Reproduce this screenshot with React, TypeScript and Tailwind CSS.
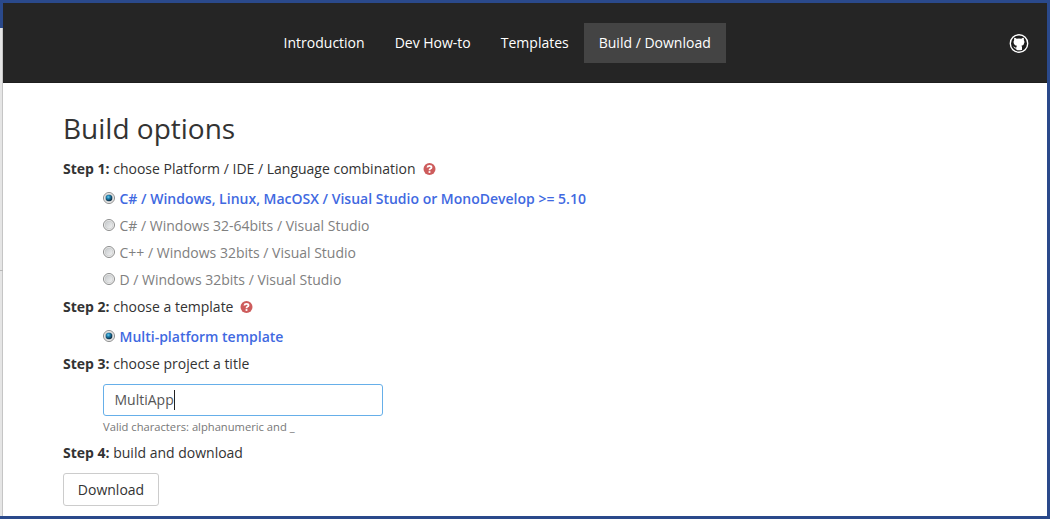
import { useState } from "react";

const navItems = ["Introduction", "Dev How-to", "Templates", "Build / Download"];

const platforms = [
  "C# / Windows, Linux, MacOSX / Visual Studio or MonoDevelop >= 5.10",
  "C# / Windows 32-64bits / Visual Studio",
  "C++ / Windows 32bits / Visual Studio",
  "D / Windows 32bits / Visual Studio",
];

function GithubIcon() {
  return (
    <svg width="20" height="20" viewBox="0 0 20 20" aria-hidden="true">
      <circle cx="10" cy="10.5" r="8.7" fill="#1c1c1c" stroke="#fff" strokeWidth="1.4" />
      <path
        d="M5.3 4.8 Q6.6 4.9 7.7 5.7 Q10 5.2 12.3 5.7 Q13.4 4.9 14.7 4.8 Q15.1 5.9 14.8 6.9 Q15.6 7.9 15.4 9.4 Q15.1 12.3 12.4 12.7 Q13 13.3 13 14.1 V16.9 Q10 17.8 7.4 16.9 V15.7 Q5.5 15.9 4.8 14.3 L4.2 13.6 Q5.1 13.4 5.8 14.3 Q6.4 15 7.4 14.6 Q7.4 13.3 8 12.7 Q4.9 12.3 4.6 9.4 Q4.4 7.9 5.2 6.9 Q4.9 5.9 5.3 4.8Z"
        fill="#fff"
      />
    </svg>
  );
}

function HelpIcon() {
  return (
    <svg className="ml-[7px] shrink-0" width="13" height="12" viewBox="0 0 13 12" aria-hidden="true">
      <circle cx="6.5" cy="6" r="6" fill="#cd5c5c" />
      <path d="M4.4 4.5 Q4.6 2.9 6.4 2.9 Q8.5 2.9 8.5 4.4 Q8.5 5.2 7.3 5.8 Q6.5 6.2 6.5 7.2" fill="none" stroke="#fff" strokeWidth="1.8" />
      <rect x="5.6" y="8.1" width="1.8" height="1.8" fill="#fff" />
    </svg>
  );
}

function RadioMark({ checked }: { checked: boolean }) {
  return (
    <svg className="mr-[4.5px] mb-[2px] shrink-0" width="12" height="12" viewBox="0 0 12 12" aria-hidden="true">
      <defs>
        <linearGradient id="face" x1="0" y1="0" x2="1" y2="1">
          <stop offset="0" stopColor="#c4c8cb" />
          <stop offset="1" stopColor="#f5f5f5" />
        </linearGradient>
        <radialGradient id="dot" cx="0.4" cy="0.35" r="0.65">
          <stop offset="0" stopColor="#6ccdf0" />
          <stop offset="0.4" stopColor="#1f80ae" />
          <stop offset="1" stopColor="#08243a" />
        </radialGradient>
      </defs>
      <circle cx="6" cy="6" r="5.5" fill="#f6f6f6" stroke="#8b8c8c" />
      <circle cx="6" cy="6" r="4" fill="url(#face)" stroke="#c2c4c5" strokeWidth="0.6" />
      {checked && <circle cx="6" cy="6" r="3.3" fill="url(#dot)" />}
    </svg>
  );
}

function Option({ label, checked, onSelect }: { label: string; checked: boolean; onSelect: () => void }) {
  return (
    <button
      type="button"
      role="radio"
      aria-checked={checked}
      onClick={onSelect}
      className={`flex h-[27px] items-center whitespace-nowrap ${checked ? "font-semibold text-[#4169e1]" : "text-[#808080]"}`}
    >
      <RadioMark checked={checked} />
      <span>{label}</span>
    </button>
  );
}

function Step({ number, text, help = false }: { number: number; text: string; help?: boolean }) {
  return (
    <div className="flex h-5 items-center whitespace-pre">
      <strong className="font-bold">Step {number}:</strong>
      <span> {text}</span>
      {help && <HelpIcon />}
    </div>
  );
}

export default function App() {
  const [platform, setPlatform] = useState(0);

  return (
    <div className="flex h-[519px] w-[1050px] flex-col overflow-hidden border-t-[3px] border-r-[3px] border-b-[3px] border-[#2a498b] bg-white font-['Open_Sans','Noto_Sans',sans-serif] text-sm leading-5 text-[#333]">
      <div className="flex min-h-0 flex-1">
        <div className="flex w-[3px] shrink-0 flex-col">
          <div className="h-[25px] bg-[#2a498b]" />
          <div className="h-[242px] border-r border-[#c5c5c5] bg-[#e5e5e5]" />
          <div className="h-px bg-[#b8b8b8]" />
          <div className="flex-1 border-r border-[#c5c5c5] bg-[#e5e5e5]" />
        </div>
        <div className="flex min-w-0 flex-1 flex-col">
          <header className="grid h-20 shrink-0 grid-cols-[265.6px_1fr_auto] items-center border-b border-[#1e1e1e] bg-[#252525] pr-[18px] text-white">
            <span />
            <nav className="flex">
              {navItems.map((item, i) => (
                <a key={item} href="#" className={`flex h-10 items-center px-[15px] ${i === 3 ? "bg-[#444]" : ""}`}>
                  {item}
                </a>
              ))}
            </nav>
            <a href="#" aria-label="GitHub">
              <GithubIcon />
            </a>
          </header>
          <main className="flex flex-col items-start pt-[27px] pl-[60px]">
            <h1 className="h-9 text-[28px] leading-9">Build options</h1>
            <div className="mt-[13px]">
              <Step number={1} text="choose Platform / IDE / Language combination" help />
            </div>
            <div role="radiogroup" className="mt-[6px] ml-10">
              {platforms.map((label, i) => (
                <Option key={label} label={label} checked={i === platform} onSelect={() => setPlatform(i)} />
              ))}
            </div>
            <div className="mt-1">
              <Step number={2} text="choose a template" help />
            </div>
            <div role="radiogroup" className="mt-[6px] ml-10">
              <Option label="Multi-platform template" checked onSelect={() => {}} />
            </div>
            <div className="mt-1">
              <Step number={3} text="choose project a title" />
            </div>
            <div className="mt-[10px] ml-10 flex h-8 w-[280px] items-center rounded-[3px] border border-[#66afe9] pl-[10.5px] text-[#555]">
              <span>MultiApp</span>
              <span className="h-5 w-px bg-[#222]" />
            </div>
            <p className="mt-[2px] ml-10 h-[18px] text-[11.2px] leading-[18px] text-[#777]">Valid characters: alphanumeric and _</p>
            <div className="mt-[7px]">
              <Step number={4} text="build and download" />
            </div>
            <button type="button" className="mt-[10px] flex h-[33px] w-24 items-center justify-center rounded-[3px] border border-[#ccc] bg-white">
              Download
            </button>
          </main>
        </div>
      </div>
    </div>
  );
}
